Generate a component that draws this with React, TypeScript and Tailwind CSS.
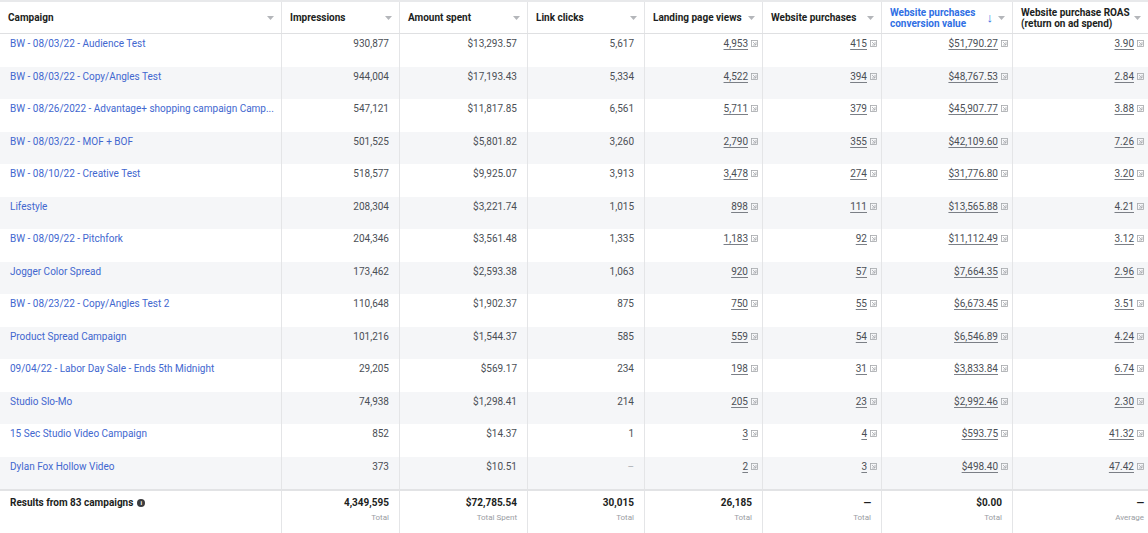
import React from 'react';

type Row = {
  name: string;
  impressions: string;
  spent: string;
  clicks: string;
  views: string;
  purchases: string;
  value: string;
  roas: string;
};

const rows: Row[] = [
  { name: 'BW - 08/03/22 - Audience Test', impressions: '930,877', spent: '$13,293.57', clicks: '5,617', views: '4,953', purchases: '415', value: '$51,790.27', roas: '3.90' },
  { name: 'BW - 08/03/22 - Copy/Angles Test', impressions: '944,004', spent: '$17,193.43', clicks: '5,334', views: '4,522', purchases: '394', value: '$48,767.53', roas: '2.84' },
  { name: 'BW - 08/26/2022 - Advantage+ shopping campaign Camp...', impressions: '547,121', spent: '$11,817.85', clicks: '6,561', views: '5,711', purchases: '379', value: '$45,907.77', roas: '3.88' },
  { name: 'BW - 08/03/22 - MOF + BOF', impressions: '501,525', spent: '$5,801.82', clicks: '3,260', views: '2,790', purchases: '355', value: '$42,109.60', roas: '7.26' },
  { name: 'BW - 08/10/22 - Creative Test', impressions: '518,577', spent: '$9,925.07', clicks: '3,913', views: '3,478', purchases: '274', value: '$31,776.80', roas: '3.20' },
  { name: 'Lifestyle', impressions: '208,304', spent: '$3,221.74', clicks: '1,015', views: '898', purchases: '111', value: '$13,565.88', roas: '4.21' },
  { name: 'BW - 08/09/22 - Pitchfork', impressions: '204,346', spent: '$3,561.48', clicks: '1,335', views: '1,183', purchases: '92', value: '$11,112.49', roas: '3.12' },
  { name: 'Jogger Color Spread', impressions: '173,462', spent: '$2,593.38', clicks: '1,063', views: '920', purchases: '57', value: '$7,664.35', roas: '2.96' },
  { name: 'BW - 08/23/22 - Copy/Angles Test 2', impressions: '110,648', spent: '$1,902.37', clicks: '875', views: '750', purchases: '55', value: '$6,673.45', roas: '3.51' },
  { name: 'Product Spread Campaign', impressions: '101,216', spent: '$1,544.37', clicks: '585', views: '559', purchases: '54', value: '$6,546.89', roas: '4.24' },
  { name: '09/04/22 - Labor Day Sale - Ends 5th Midnight', impressions: '29,205', spent: '$569.17', clicks: '234', views: '198', purchases: '31', value: '$3,833.84', roas: '6.74' },
  { name: 'Studio Slo-Mo', impressions: '74,938', spent: '$1,298.41', clicks: '214', views: '205', purchases: '23', value: '$2,992.46', roas: '2.30' },
  { name: '15 Sec Studio Video Campaign', impressions: '852', spent: '$14.37', clicks: '1', views: '3', purchases: '4', value: '$593.75', roas: '41.32' },
  { name: 'Dylan Fox Hollow Video', impressions: '373', spent: '$10.51', clicks: '–', views: '2', purchases: '3', value: '$498.40', roas: '47.42' },
];

const cols = 'grid grid-cols-[282px_118px_128px_117px_118px_119px_131px_135px]';

const Caret = () => (
  <svg width="7" height="4" viewBox="0 0 7 4" className="shrink-0">
    <path d="M0 0h7L3.5 4z" fill="#b4b6ba" />
  </svg>
);

// small "compare" glyph next to attributed numbers
const Mark = () => (
  <svg width="7" height="7" viewBox="0 0 7 7" className="shrink-0 ml-[3px] -translate-y-[2px]">
    <rect x="0.5" y="0.5" width="6" height="6" fill="none" stroke="#a5a7ab" strokeWidth="0.8" />
    <path d="M2 2l3 3M5 2v3H2" fill="none" stroke="#a5a7ab" strokeWidth="0.8" />
  </svg>
);

const HeadCell = ({ children, blue, last }: { children: React.ReactNode; blue?: boolean; last?: boolean }) => (
  <div className={`flex items-center justify-between pl-[8px] pr-[7px] ${last ? '' : 'border-r border-[#e4e5e7]'}`}>
    <span className={`font-bold text-[10px] leading-[11px] ${blue ? 'text-[#2f6fe4]' : 'text-[#1c1e21]'}`}>{children}</span>
    <span className="flex items-center gap-[5px]">
      {blue && <span className="text-[#2f6fe4] text-[13px] font-bold leading-none">↓</span>}
      <Caret />
    </span>
  </div>
);

const Num = ({ v, muted }: { v: string; muted?: boolean }) => (
  <div className={`flex justify-end pr-[10px] pt-[3px] border-r border-[#e4e5e7] ${muted ? 'text-[#b0b3b8]' : 'text-[#4b4f56]'}`}>{v}</div>
);

const Linked = ({ v, last }: { v: string; last?: boolean }) => (
  <div className={`flex justify-end items-start pr-[4px] pt-[3px] text-[#4b4f56] ${last ? '' : 'border-r border-[#e4e5e7]'}`}>
    <span className="underline decoration-[#7b7f86] underline-offset-[2px]">{v}</span>
    <span className="mt-[5px] flex">
      <Mark />
    </span>
  </div>
);

const FootCell = ({ v, label, last }: { v: string; label: string; last?: boolean }) => (
  <div className={`flex flex-col items-end pt-[5px] ${last ? 'pr-[4px]' : 'pr-[10px] border-r border-[#e4e5e7]'}`}>
    <span className="font-bold text-[10px] leading-[14px] text-[#1c1e21]">{v}</span>
    <span className="text-[8px] leading-[12px] mt-[2px] text-[#9a9da3]">{label}</span>
  </div>
);

export default function App() {
  return (
    <div className="w-[1148px] h-[533px] overflow-hidden bg-white text-[10px] leading-[14px]" style={{ fontFamily: 'Roboto, "Liberation Sans", sans-serif' }}>
      <div className={`${cols} h-[34px] border-t-2 border-[#e8e9eb] border-b border-b-[#dfe0e2]`}>
        <HeadCell>Campaign</HeadCell>
        <HeadCell>Impressions</HeadCell>
        <HeadCell>Amount spent</HeadCell>
        <HeadCell>Link clicks</HeadCell>
        <HeadCell>Landing page views</HeadCell>
        <HeadCell>Website purchases</HeadCell>
        <HeadCell blue>
          Website purchases
          <br />
          conversion value
        </HeadCell>
        <HeadCell last>
          Website purchase ROAS
          <br />
          (return on ad spend)
        </HeadCell>
      </div>

      {rows.map((r, i) => (
        <div key={r.name} className={`${cols} h-[32.5px] ${i % 2 === 1 ? 'bg-[#f5f6f8]' : 'bg-white'}`}>
          <div className="pl-[10px] pt-[3px] border-r border-[#e4e5e7] text-[#4267cf] whitespace-nowrap">{r.name}</div>
          <Num v={r.impressions} />
          <Num v={r.spent} />
          <Num v={r.clicks} muted={r.clicks === '–'} />
          <Linked v={r.views} />
          <Linked v={r.purchases} />
          <Linked v={r.value} />
          <Linked v={r.roas} last />
        </div>
      ))}

      <div className={`${cols} h-[44px] border-t-2 border-[#e2e3e5]`}>
        <div className="flex items-start gap-[4px] pl-[10px] pt-[5px] border-r border-[#e4e5e7]">
          <span className="font-bold text-[#1c1e21]">Results from 83 campaigns</span>
          <span className="mt-[3px] w-[8px] h-[8px] rounded-full bg-[#3a3b3e] text-white text-[6px] leading-[8px] font-bold flex items-center justify-center">i</span>
        </div>
        <FootCell v="4,349,595" label="Total" />
        <FootCell v="$72,785.54" label="Total Spent" />
        <FootCell v="30,015" label="Total" />
        <FootCell v="26,185" label="Total" />
        <FootCell v="—" label="Total" />
        <FootCell v="$0.00" label="Total" />
        <FootCell v="—" label="Average" last />
      </div>
    </div>
  );
}
